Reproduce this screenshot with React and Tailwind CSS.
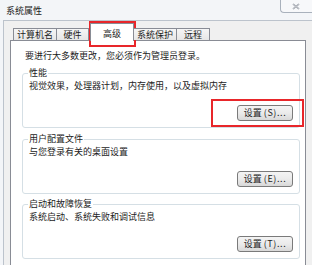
export default function App() {
  const tabs = [
    { label: "计算机名", w: "w-[44px]", cls: "" },
    { label: "硬件", w: "w-[33px]", cls: "-ml-px" },
    { label: "高级", w: "w-[44px]", cls: "ml-[1px]", active: true },
    { label: "系统保护", w: "w-[44px]", cls: "-ml-px" },
    { label: "远程", w: "w-[34px]", cls: "-ml-px" },
  ];

  const groups = [
    { title: "性能", desc: "视觉效果，处理器计划，内存使用，以及虚拟内存", key: "S", mt: "mt-[11px]" },
    { title: "用户配置文件", desc: "与您登录有关的桌面设置", key: "E", mt: "mt-[11px]" },
    { title: "启动和故障恢复", desc: "系统启动、系统失败和调试信息", key: "T", mt: "mt-[10px]" },
  ];

  return (
    <div
      className="relative w-[312px] h-[265px] overflow-hidden bg-[#f3f5f8] text-[9px] leading-[12px] text-[#1c1c1c] flex flex-col"
      style={{ fontFamily: '"Noto Sans CJK SC", "Noto Sans", sans-serif' }}
    >
      {/* title bar */}
      <div className="h-[20px] flex justify-between items-start shrink-0">
        <div className="pl-[6px] pt-[5px] text-[#222]">系统属性</div>
        <div className="w-[32px] h-[13px] border-l border-b border-[#a9b1bc] rounded-bl-[4px] bg-[#f7f8fa] flex items-center justify-start pl-[11px]">
          <svg width="8" height="7" viewBox="0 0 8 7">
            <path d="M1 1 L7 6 M7 1 L1 6" stroke="#8a909a" strokeWidth="1.6" fill="none" />
            <path d="M1 1 L7 6 M7 1 L1 6" stroke="#f4f5f7" strokeWidth="0.5" fill="none" />
          </svg>
        </div>
      </div>

      {/* client area */}
      <div className="ml-[3px] flex-1 border-l border-t border-[#bcc3cc] bg-[#f0f0f0] pl-[6px] pt-[2px]">
        <div className="relative z-10 -mb-px flex items-end h-[18px] pl-[3px]">
          {tabs.map((t) =>
            t.active ? (
              <div
                key={t.label}
                className={`${t.w} ${t.cls} h-[18px] border-l border-t border-r border-[#898c95] bg-white flex justify-center pt-[4px]`}
              >
                {t.label}
              </div>
            ) : (
              <div
                key={t.label}
                className={`${t.w} ${t.cls} h-[12px] mb-px border-l border-t border-r border-[#898c95] bg-gradient-to-b from-[#f6f6f6] to-[#e6e6e6] flex justify-center leading-[11px]`}
              >
                {t.label}
              </div>
            )
          )}
        </div>

        <div className="w-[296px] h-[240px] border border-[#898c95] bg-white pl-[11px] pt-[9px]">
          <div className="pl-[3px]">要进行大多数更改，您必须作为管理员登录。</div>

          {groups.map((g) => (
            <div
              key={g.title}
              className={`${g.mt} w-[278px] h-[55px] border border-[#d5dfe5] rounded-[3px] flex flex-col`}
            >
              <div className="-mt-[7px] pl-[5px] h-[12px]">
                <span className="bg-white px-px">{g.title}</span>
              </div>
              <div className="mt-[1px] pl-[6px]">{g.desc}</div>
              <div className="mt-[13px] flex justify-end pr-[6px]">
                <button className="w-[56px] h-[16px] border border-[#7a7a7a] rounded-[3px] bg-gradient-to-b from-[#f4f4f4] via-[#ebebeb] to-[#d8d8d8] text-[9px] leading-[12px] text-[#1c1c1c] flex items-center justify-center">
                  设置<span className="tracking-[0.6px] pl-[2px]">({g.key})...</span>
                </button>
              </div>
            </div>
          ))}
        </div>
      </div>

      {/* red highlight marks */}
      <div className="absolute left-[89px] top-[21px] w-[47px] h-[26px] border-2 border-[#e8262a]" />
      <div className="absolute left-[211px] top-[99px] w-[93px] h-[28px] border-2 border-[#e8262a]" />
    </div>
  );
}
